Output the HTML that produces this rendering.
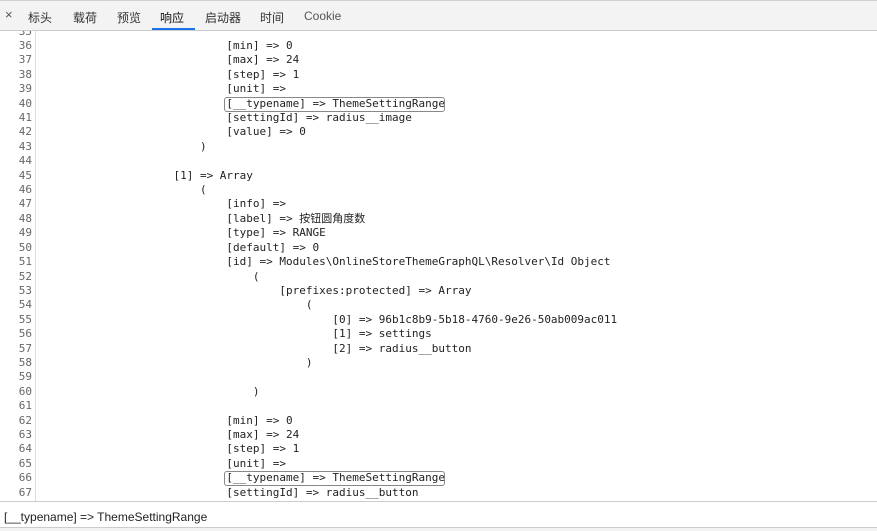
<!DOCTYPE html>
<html><head><meta charset="utf-8"><style>
html,body{margin:0;padding:0;width:877px;height:531px;overflow:hidden;background:#fff;font-family:"Liberation Sans","Noto Sans CJK SC",sans-serif;}
#tabs{position:absolute;left:0;top:0;width:877px;height:31px;background:#f3f3f3;border-top:1px solid #d0d0d0;border-bottom:1px solid #cbcbcb;box-sizing:border-box}
.t{position:absolute;top:8px;font-size:12px;color:#333;}
#ul{position:absolute;left:152px;top:27px;width:43px;height:2px;background:#1a73e8}
#code{position:absolute;left:0;top:31px;width:877px;height:470px;overflow:hidden}
#gut{position:absolute;left:35px;top:0;width:1px;height:470px;background:#ddd}
#lines{position:absolute;left:0;top:-6.4px;width:877px}
.l{position:relative;height:14.42px;line-height:14.42px;font-family:"DejaVu Sans Mono","Noto Sans CJK SC",monospace;font-size:11px;white-space:pre;color:#222}
.n{position:absolute;left:0;top:0;width:32px;text-align:right;color:#666}
.c{position:absolute;left:41px;top:0}
.box{position:absolute;left:224px;top:0;width:221px;height:15px;border:1px solid #888;border-radius:3px;box-sizing:border-box}
#st{position:absolute;left:0;top:501px;width:877px;height:27px;border-top:1px solid #ccc;border-bottom:1px solid #ccc;background:#fff;font-size:12px;color:#222;box-sizing:border-box}
#bot{position:absolute;left:0;top:528px;width:877px;height:3px;background:#f3f3f3}
</style></head><body>
<div id="tabs">
<span class="t" style="left:5px;font-size:13px;top:6px;color:#555">×</span>
<span class="t" style="left:28px">标头</span>
<span class="t" style="left:73px">载荷</span>
<span class="t" style="left:117px">预览</span>
<span class="t" style="left:160px;color:#111">响应</span>
<span class="t" style="left:205px">启动器</span>
<span class="t" style="left:260px">时间</span>
<span class="t" style="left:304px;color:#555">Cookie</span>
<div id="ul"></div>
</div>
<div id="code">
<div id="gut"></div>
<div id="lines">
<div class="l"><span class="n">35</span></div>
<div class="l"><span class="n">36</span><span class="c">                            [min] =&gt; 0</span></div>
<div class="l"><span class="n">37</span><span class="c">                            [max] =&gt; 24</span></div>
<div class="l"><span class="n">38</span><span class="c">                            [step] =&gt; 1</span></div>
<div class="l"><span class="n">39</span><span class="c">                            [unit] =&gt; </span></div>
<div class="l"><span class="n">40</span><span class="c">                            [__typename] =&gt; ThemeSettingRange</span><div class="box"></div></div>
<div class="l"><span class="n">41</span><span class="c">                            [settingId] =&gt; radius__image</span></div>
<div class="l"><span class="n">42</span><span class="c">                            [value] =&gt; 0</span></div>
<div class="l"><span class="n">43</span><span class="c">                        )</span></div>
<div class="l"><span class="n">44</span></div>
<div class="l"><span class="n">45</span><span class="c">                    [1] =&gt; Array</span></div>
<div class="l"><span class="n">46</span><span class="c">                        (</span></div>
<div class="l"><span class="n">47</span><span class="c">                            [info] =&gt; </span></div>
<div class="l"><span class="n">48</span><span class="c">                            [label] =&gt; 按钮圆角度数</span></div>
<div class="l"><span class="n">49</span><span class="c">                            [type] =&gt; RANGE</span></div>
<div class="l"><span class="n">50</span><span class="c">                            [default] =&gt; 0</span></div>
<div class="l"><span class="n">51</span><span class="c">                            [id] =&gt; Modules\OnlineStoreThemeGraphQL\Resolver\Id Object</span></div>
<div class="l"><span class="n">52</span><span class="c">                                (</span></div>
<div class="l"><span class="n">53</span><span class="c">                                    [prefixes:protected] =&gt; Array</span></div>
<div class="l"><span class="n">54</span><span class="c">                                        (</span></div>
<div class="l"><span class="n">55</span><span class="c">                                            [0] =&gt; 96b1c8b9-5b18-4760-9e26-50ab009ac011</span></div>
<div class="l"><span class="n">56</span><span class="c">                                            [1] =&gt; settings</span></div>
<div class="l"><span class="n">57</span><span class="c">                                            [2] =&gt; radius__button</span></div>
<div class="l"><span class="n">58</span><span class="c">                                        )</span></div>
<div class="l"><span class="n">59</span></div>
<div class="l"><span class="n">60</span><span class="c">                                )</span></div>
<div class="l"><span class="n">61</span></div>
<div class="l"><span class="n">62</span><span class="c">                            [min] =&gt; 0</span></div>
<div class="l"><span class="n">63</span><span class="c">                            [max] =&gt; 24</span></div>
<div class="l"><span class="n">64</span><span class="c">                            [step] =&gt; 1</span></div>
<div class="l"><span class="n">65</span><span class="c">                            [unit] =&gt; </span></div>
<div class="l"><span class="n">66</span><span class="c">                            [__typename] =&gt; ThemeSettingRange</span><div class="box"></div></div>
<div class="l"><span class="n">67</span><span class="c">                            [settingId] =&gt; radius__button</span></div>
</div>
</div>
<div id="st"><span style="position:absolute;left:4px;top:8px">[__typename] =&gt; ThemeSettingRange</span></div>
<div id="bot"></div>
</body></html>
